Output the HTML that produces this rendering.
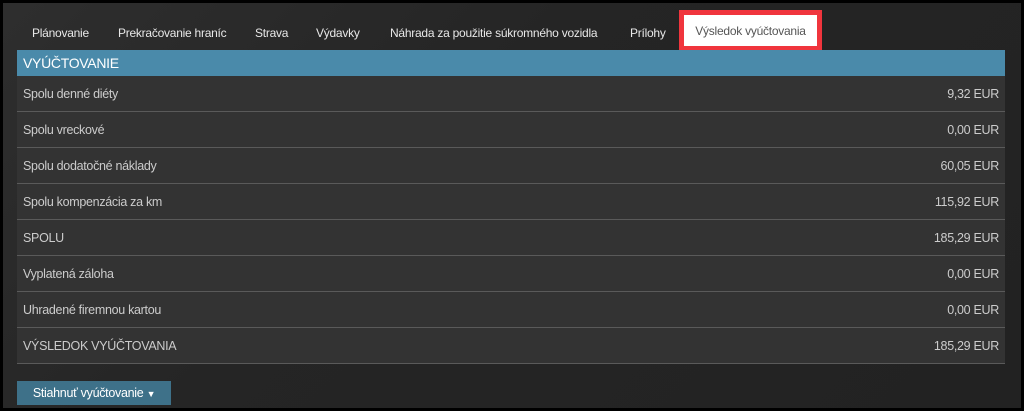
<!DOCTYPE html><html><head><style>
body{margin:0;width:1024px;height:411px;overflow:hidden;background:#000;font-family:"Liberation Sans",sans-serif;}
.f{position:absolute;left:3px;top:3px;width:1018px;height:405px;background:linear-gradient(135deg,#2e2e2e 0%,#252525 40%,#222 100%);}
.tab{position:absolute;top:26px;font-size:12px;letter-spacing:-0.25px;color:#e8e8e8;white-space:nowrap;}
.red{position:absolute;left:679px;top:10px;width:143px;height:40px;background:#f0353d;}
.wt{position:absolute;left:684px;top:15px;width:133px;height:31px;background:#fff;color:#555;font-size:12px;letter-spacing:-0.25px;line-height:33px;text-align:center;}
.tbl{position:absolute;left:17px;top:50px;width:988px;}
.hd{height:26px;background:#4a8aaa;color:#fff;font-size:14px;letter-spacing:-0.3px;line-height:26px;padding-left:6px;}
.r{height:35px;border-bottom:1px solid #5a5a5a;background:#333;color:#ccc;font-size:12.5px;letter-spacing:-0.3px;line-height:36px;padding:0 6px;display:flex;justify-content:space-between;}
.btn{position:absolute;left:17px;top:381px;width:154px;height:24px;background:#3e7189;color:#fff;font-size:12.5px;letter-spacing:-0.3px;line-height:24px;text-align:center;}
</style></head><body><div class="f"></div>
<span class="tab" style="left:32px">Plánovanie</span>
<span class="tab" style="left:118px">Prekračovanie hraníc</span>
<span class="tab" style="left:255px">Strava</span>
<span class="tab" style="left:316px">Výdavky</span>
<span class="tab" style="left:390px">Náhrada za použitie súkromného vozidla</span>
<span class="tab" style="left:630px">Prílohy</span>
<div class="red"></div><div class="wt">Výsledok vyúčtovania</div>
<div class="tbl"><div class="hd">VYÚČTOVANIE</div>
<div class="r"><span>Spolu denné diéty</span><span>9,32 EUR</span></div>
<div class="r"><span>Spolu vreckové</span><span>0,00 EUR</span></div>
<div class="r"><span>Spolu dodatočné náklady</span><span>60,05 EUR</span></div>
<div class="r"><span>Spolu kompenzácia za km</span><span>115,92 EUR</span></div>
<div class="r"><span>SPOLU</span><span>185,29 EUR</span></div>
<div class="r"><span>Vyplatená záloha</span><span>0,00 EUR</span></div>
<div class="r"><span>Uhradené firemnou kartou</span><span>0,00 EUR</span></div>
<div class="r"><span>VÝSLEDOK VYÚČTOVANIA</span><span>185,29 EUR</span></div>
</div>
<div class="btn">Stiahnuť vyúčtovanie <span style="font-size:9px">▼</span></div>
</body></html>
